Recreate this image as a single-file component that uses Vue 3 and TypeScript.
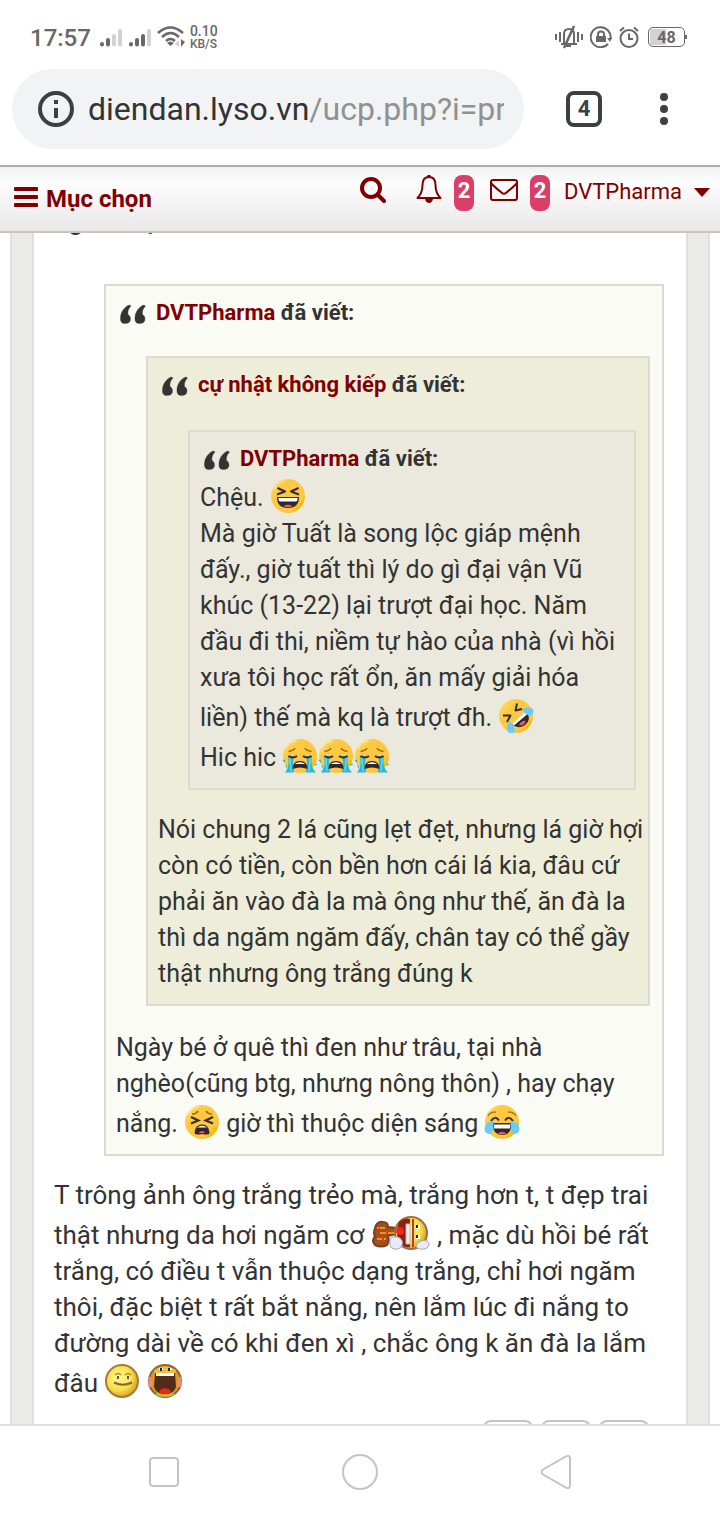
<script setup lang="ts">
import { defineComponent, h } from 'vue'

const Smiley = defineComponent({
  props: { name: { type: String, required: true }, label: { type: String, required: true } },
  setup(props) {
    const wide = props.name === 'guitar'
    return () =>
      h(
        'svg',
        {
          class: ['smiley', wide ? 'smiley-wide' : ''],
          viewBox: wide ? '0 0 60 36' : '0 0 36 36',
          role: 'img',
          'aria-label': props.label,
        },
        [h('use', { href: `#sm-${props.name}` })],
      )
  },
})

const QuoteMark = defineComponent({
  setup() {
    return () =>
      h('svg', { class: 'quote-mark', viewBox: '0 0 30 24', 'aria-hidden': 'true' }, [
        h('use', { href: '#quote-mark' }),
      ])
  },
})

const postActions: string[] = ['Trích dẫn', 'Báo cáo', 'Xóa']
</script>

<template>
  <div class="screen">
    <svg class="defs" width="0" height="0" aria-hidden="true">
      <defs>
        <linearGradient id="gold" x1="0.1" y1="0.1" x2="0.95" y2="0.85">
          <stop offset="0" stop-color="#ffd965" />
          <stop offset="0.25" stop-color="#fdc943" />
          <stop offset="0.8" stop-color="#fdc840" />
          <stop offset="0.9" stop-color="#ffb800" />
        </linearGradient>
        <radialGradient id="yellow" cx="0.4" cy="0.4" r="0.6">
          <stop offset="0" stop-color="#fff98a" />
          <stop offset="0.65" stop-color="#f9e04b" />
          <stop offset="1" stop-color="#dda52e" />
        </radialGradient>
        <symbol id="quote-mark" viewBox="0 0 30 24">
          <g fill="#333" stroke="#333" stroke-opacity="0.35" stroke-width="1">
            <path d="M11.500 3C7.500 4 3 9 2.500 15C2 20 4 21.500 7 21.500C10.500 21.500 12.500 20 12.500 17C12.500 14.500 11.500 13.500 10 12.500C9.500 9 10.500 6.500 13 4Z" />
            <path d="M26 3C22 4 17.500 9 17 15C16.500 20 18.500 21.500 21.500 21.500C25 21.500 27 20 27 17C27 14.500 26 13.500 24.500 12.500C24 9 25 6.500 27.500 4Z" />
          </g>
        </symbol>
        <symbol id="sm-laugh" viewBox="0 0 36 36">
          <circle cx="18" cy="18" r="17" fill="url(#gold)" />
          <path d="M4 11Q7 4 14 3" fill="none" stroke="#ffe59a" stroke-width="1.500" stroke-linecap="round" />
          <path d="M7.500 10L15 13.500L7 16.500M28.500 10L21 13.500L29 16.500" fill="none" stroke="#352c38" stroke-width="2" stroke-linejoin="round" />
          <path d="M7 19H29Q29 30 18 30Q7 30 7 19Z" fill="#302633" />
          <path d="M8.500 20H27.500V22Q27 23.500 25.500 23.500H10.500Q9 23.500 8.500 22Z" fill="#fff" />
          <path d="M13.500 28Q18 25.500 22.500 28Q18 30.500 13.500 28Z" fill="#f05a5a" />
        </symbol>
        <symbol id="sm-rofl" viewBox="0 0 36 36">
          <circle cx="18" cy="18" r="17" fill="url(#gold)" />
          <path d="M19 5.500L17.500 12.500L24 11M5 17.500L12.500 17.500L9 24" fill="none" stroke="#352c38" stroke-width="2" stroke-linejoin="round" />
          <path d="M13.500 26L28.500 13.500Q34 22 27 27Q20 32 13.500 26Z" fill="#302633" />
          <path d="M14 25.500L28 13.500L29.500 16L16 27.500Z" fill="#fff" />
          <path d="M21 27.500Q22 23 27.500 22.500Q27.500 27.500 21 27.500Z" fill="#f05a5a" />
          <path d="M24 11Q30 8 35 11Q37 16 32 17.500Q27 17 24 11ZM11 23Q17 28 17 33Q14 37 10 34Q8 30 11 23Z" fill="#67cdf8" />
        </symbol>
        <symbol id="sm-cry" viewBox="0 0 36 36">
          <circle cx="18" cy="18" r="17" fill="url(#gold)" />
          <path d="M4 10Q7 4 14 3" fill="none" stroke="#ffe59a" stroke-width="1.500" stroke-linecap="round" />
          <path d="M6 18H12Q10 24 12 34.500L3 34.500Q8 29 6 18ZM30 18H24Q26 24 24 34.500L34 34.500Q28 29 30 18Z" fill="#27b9d7" />
          <path d="M8 19Q8 26 9 33M28 19Q28 26 27 33" fill="none" stroke="#65d6ea" stroke-width="1.500" />
          <path d="M0.500 22L3 21.500V25ZM35.500 26L32.500 28V25.500ZM3 27L5 28V31Z" fill="#27b9d7" />
          <path d="M6.500 13.500Q12 12.500 13 10M29.500 13.500Q24 12.500 23 10" fill="none" stroke="#a26c12" stroke-width="1.500" />
          <path d="M6.500 18Q11 21 15 18M29.500 18Q25 21 21 18" fill="none" stroke="#352c38" stroke-width="2" />
          <path d="M10.500 31Q10.500 23 18 23Q25.500 23 25.500 31Q18 28 10.500 31Z" fill="#302633" />
          <path d="M12.500 26Q18 22.500 23.500 26Z" fill="#fff" />
        </symbol>
        <symbol id="sm-tired" viewBox="0 0 36 36">
          <circle cx="18" cy="18" r="17" fill="url(#gold)" />
          <path d="M4 11Q7 4 14 3" fill="none" stroke="#ffe59a" stroke-width="1.500" stroke-linecap="round" />
          <path d="M8 10Q12 10 14 7M28 10Q24 10 22 7" fill="none" stroke="#a26c12" stroke-width="1.500" />
          <path d="M7 13L14.500 16.500L7 19.500M29 13L21.500 16.500L29 19.500" fill="none" stroke="#352c38" stroke-width="2" />
          <path d="M10.500 29Q11 20.500 18 20.500Q25 20.500 25.500 29Q25 31.500 18 30Q11 31.500 10.500 29Z" fill="#302633" />
          <path d="M13 23.500Q18 20 23 23.500Z" fill="#fff" />
          <path d="M14.500 28.500Q18 25.500 21.500 28.500Q18 30 14.500 28.500Z" fill="#f05a5a" />
        </symbol>
        <symbol id="sm-joy" viewBox="0 0 36 36">
          <circle cx="18" cy="18" r="17" fill="url(#gold)" />
          <path d="M4 12Q6 8 12 8M32 12Q30 8 24 8" fill="none" stroke="#b57a18" stroke-width="1.500" />
          <path d="M7 17Q11 11 15 16.500M29 17Q25 11 21 16.500" fill="none" stroke="#352c38" stroke-width="2" />
          <path d="M9 19H27Q28 31 18 31Q8 31 9 19Z" fill="#302633" />
          <path d="M10 20.500H26V24.500H10Z" fill="#fff" />
          <path d="M13.500 29.500Q18 26 22.500 29.500Q18 31.500 13.500 29.500Z" fill="#f05a5a" />
          <path d="M9.500 17Q2 17.500 0.500 24Q0.500 30 6 30Q10 28 9.500 17ZM26.500 17Q34 17.500 35.500 24Q35.500 30 30 30Q26 28 26.500 17Z" fill="#67cdf8" />
        </symbol>
        <symbol id="sm-smirk" viewBox="0 0 36 36">
          <circle cx="18" cy="18" r="16" fill="url(#yellow)" stroke="#a97a31" stroke-width="2" />
          <path d="M11 12Q14 9 17 12M21 12Q24 9 27 12" fill="none" stroke="#b0862a" stroke-width="1.500" />
          <path d="M11 15H17M21 15H27" stroke="#f3efc0" stroke-width="2" />
          <path d="M14 13V16M24 13V16" stroke="#6b5127" stroke-width="2" />
          <path d="M10 19.500Q19 24 28 19.500" fill="none" stroke="#85672b" stroke-width="2" />
        </symbol>
        <symbol id="sm-scream" viewBox="0 0 36 36">
          <circle cx="18" cy="18" r="16" fill="#d99a29" stroke="#8f6430" stroke-width="2" />
          <path d="M7 7Q18 0 29 7L28 10H8Z" fill="#f0bd3c" />
          <path d="M3 14V24M33 14V24" stroke="#eb8a86" stroke-width="3" />
          <path d="M12 6H16M21 6H25" stroke="#fff" stroke-width="2" />
          <path d="M14 5V8M22 5V8" stroke="#222" stroke-width="2" />
          <path d="M8 10H28L29 24Q27 31 18 31Q9 31 7 24Z" fill="#522b1a" />
          <path d="M9 10H27V13H9Z" fill="#fff" />
          <path d="M12 28Q18 22 24 28Q23 31 18 31Q13 31 12 28Z" fill="#ee2417" />
          <path d="M9 31Q18 35 27 31" fill="none" stroke="#a8c93a" stroke-width="2" />
        </symbol>
        <symbol id="sm-guitar" viewBox="0 0 60 36">
          <path d="M4 13Q6 6 12 7Q17 7 17 12L25 13V19L17 21Q19 27 16 30Q10 33 4 30Q0 26 4 21Q2 18 4 13Z" fill="#a3501d" stroke="#74441d" stroke-width="2" />
          <path d="M6 13H14M6 24H15M9 18H23" stroke="#e89423" stroke-width="2" />
          <path d="M8 16V13M12 26V22M16 15V19" stroke="#df3d11" stroke-width="2" />
          <circle cx="40" cy="18" r="16" fill="url(#yellow)" stroke="#a46c45" stroke-width="2" />
          <path d="M28 7Q34 2 39 4V32Q32 33 28 27Q24 18 28 7Z" fill="#8d1f14" />
          <circle cx="29" cy="16" r="4" fill="#f3271a" />
          <path d="M35 9H39V29H35Z" fill="#eee" stroke="#bbb" stroke-width="1" />
          <path d="M42 4V32" stroke="#cc3b21" stroke-width="2" />
          <path d="M45 12H49M45 22H49" stroke="#fff" stroke-width="4" />
          <path d="M46 10V13M46 20V23" stroke="#222" stroke-width="2" />
          <path d="M19 24Q23 20 29 23Q34 28 29 33Q22 36 19 31Z" fill="#e9eaf8" stroke="#a3a4bd" stroke-width="1" />
          <path d="M46 29Q50 24 56 26Q60 29 56 33Q50 36 45 32Z" fill="#e9eaf8" stroke="#a3a4bd" stroke-width="1" />
        </symbol>
      </defs>
    </svg>

    <div class="status-bar">
      <div class="status-left">
        <span class="clock">17:57</span>
        <svg class="signal" viewBox="0 0 22 20" aria-hidden="true">
          <g stroke-width="4" stroke-linecap="round" stroke="#686868">
            <path d="M2 16V16.500M8 12V16.500" />
            <path d="M14 8V16.500M20 3V16.500" stroke="#d2d2d2" />
          </g>
        </svg>
        <svg class="signal second" viewBox="0 0 22 20" aria-hidden="true">
          <g stroke-width="4" stroke-linecap="round" stroke="#686868">
            <path d="M2 16V16.500M8 12V16.500M14 8V16.500" />
            <path d="M20 3V16.500" stroke="#d2d2d2" />
          </g>
        </svg>
        <svg class="wifi" viewBox="0 0 28 22" aria-hidden="true">
          <g fill="none" stroke="#686868" stroke-width="2.500">
            <path d="M1 7Q13.500 -4 26 7M5 11Q13.500 3 22 11M9 15Q13.500 11 18 15" />
          </g>
          <path d="M10 17Q13.500 14 17 17L13.500 20Z" fill="#686868" />
          <path d="M22 14V21L18 18Z" fill="#d2d2d2" />
          <path d="M24 13V21L28 16Z" fill="#686868" />
        </svg>
        <span class="rate"><span>0.10</span><span class="unit">KB/S</span></span>
      </div>
      <div class="status-right">
        <svg class="mute" viewBox="0 0 30 24" aria-hidden="true">
          <g fill="none" stroke="#686868" stroke-width="2">
            <path d="M2 9V15M6 7V17M24 7V17M28 9V15" />
            <path d="M7 19H23M10 19V9Q10 4 15 4Q20 4 20 9V19M12 21H17" />
            <path d="M20 1L10 23" stroke-width="2.500" />
          </g>
        </svg>
        <svg class="lock" viewBox="0 0 22 22" aria-hidden="true">
          <path d="M18 18A10 10 0 1 1 20.500 13" fill="none" stroke="#686868" stroke-width="2" />
          <path d="M17 12H22L20 16Z" fill="#686868" />
          <path d="M6 10H16V16H6Z" fill="#686868" />
          <path d="M8 10V8Q8 5.500 11 5.500Q14 5.500 14 8V10" fill="none" stroke="#686868" stroke-width="2" />
        </svg>
        <svg class="alarm" viewBox="0 0 20 22" aria-hidden="true">
          <g fill="none" stroke="#686868" stroke-width="2">
            <circle cx="10" cy="12.500" r="8.500" />
            <path d="M10 7.500V13H14M1 5L5 1.500M19 5L15 1.500" />
          </g>
        </svg>
        <span class="battery">48</span>
      </div>
    </div>

    <div class="toolbar">
      <button class="address" type="button">
        <svg class="info" viewBox="0 0 36 36" aria-hidden="true">
          <circle cx="18" cy="18" r="16" fill="none" stroke="#3c4043" stroke-width="4" />
          <path d="M18 9V13M18 17V27" stroke="#3c4043" stroke-width="4" />
        </svg>
        <span class="url">diendan.lyso.vn<span class="path">/ucp.php?i=privmsg</span></span>
      </button>
      <button class="tabs" type="button">4</button>
      <button class="more" type="button" aria-label="Menu">
        <svg viewBox="0 0 8 32" aria-hidden="true">
          <g fill="#3c4043"><circle cx="4" cy="4" r="4" /><circle cx="4" cy="16" r="4" /><circle cx="4" cy="28" r="4" /></g>
        </svg>
      </button>
    </div>

    <header class="site-header">
      <a class="menu" href="#menu">
        <svg viewBox="0 0 24 20" aria-hidden="true"><path d="M1.500 2H22.500M1.500 10H22.500M1.500 18H22.500" stroke="#800000" stroke-width="4" stroke-linecap="round" /></svg>
        Mục chọn
      </a>
      <nav class="tools">
        <a class="search" href="#search" aria-label="Tìm kiếm">
          <svg viewBox="0 0 26 26" aria-hidden="true"><circle cx="11" cy="11" r="9" fill="none" stroke="#800000" stroke-width="4" /><path d="M18 18L24 24" stroke="#800000" stroke-width="4" stroke-linecap="round" /></svg>
        </a>
        <a class="notice" href="#notifications">
          <svg class="bell" viewBox="0 0 26 28" aria-hidden="true">
            <path d="M13 2C8 2 6.500 6 6.500 10C6.500 17 4.500 20 1.500 23H24.500C21.500 20 19.500 17 19.500 10C19.500 6 18 2 13 2Z" fill="none" stroke="#800000" stroke-width="2" stroke-linejoin="round" />
            <path d="M13 0V3" stroke="#800000" stroke-width="3" /><path d="M9 24H17Q16 28 13 28Q10 28 9 24Z" fill="#800000" />
          </svg>
          <span class="badge">2</span>
        </a>
        <a class="notice" href="#messages">
          <svg class="mail" viewBox="0 0 28 22" aria-hidden="true">
            <path d="M3 1H25Q27 1 27 3V19Q27 21 25 21H3Q1 21 1 19V3Q1 1 3 1ZM1.500 4.500Q4 7.500 11.500 13.500Q14 16 16.500 13.500Q24 7.500 26.500 4.500" fill="none" stroke="#800000" stroke-width="2" />
          </svg>
          <span class="badge">2</span>
        </a>
        <a class="user" href="#user">DVTPharma
          <svg viewBox="0 0 16 10" aria-hidden="true"><path d="M0 0H16L8 9Z" fill="#800000" /></svg>
        </a>
      </nav>
    </header>

    <main class="page">
      <article class="post">
        <p class="lead">nghe nhị</p>
        <blockquote class="quote outer">
          <cite class="cite"><QuoteMark /><a href="#u1">DVTPharma</a>&nbsp;đã viết:</cite>
          <blockquote class="quote middle">
            <cite class="cite"><QuoteMark /><a href="#u2">cự nhật không kiếp</a>&nbsp;đã viết:</cite>
            <blockquote class="quote inner">
              <cite class="cite"><QuoteMark /><a href="#u1">DVTPharma</a>&nbsp;đã viết:</cite>
              <p>
                Chệu. <Smiley name="laugh" label="😆" /><br />
                Mà giờ Tuất là song lộc giáp mệnh đấy., giờ tuất thì lý do gì đại vận Vũ khúc (13-22) lại trượt đại học. Năm
                đầu đi thi, niềm tự hào của nhà (vì hồi xưa tôi học rất ổn, ăn mấy giải hóa liền) thế mà kq là trượt đh.
                <Smiley name="rofl" label="🤣" /><br />
                Hic hic <Smiley name="cry" label="😭" /><Smiley name="cry" label="😭" /><Smiley name="cry" label="😭" />
              </p>
            </blockquote>
            <p class="reply">
              Nói chung 2 lá cũng lẹt đẹt, nhưng lá giờ hợi còn có tiền, còn bền hơn cái lá kia, đâu cứ phải ăn vào đà la
              mà ông như thế, ăn đà la thì da ngăm ngăm đấy, chân tay có thể gầy thật nhưng ông trắng đúng k
            </p>
          </blockquote>
          <p>
            Ngày bé ở quê thì đen như trâu, tại nhà nghèo(cũng btg, nhưng nông thôn) , hay chạy nắng.
            <Smiley name="tired" label="😫" /> giờ thì thuộc diện sáng <Smiley name="joy" label="😂" />
          </p>
        </blockquote>
        <p>
          T trông ảnh ông trắng trẻo mà, trắng hơn t, t đẹp trai thật nhưng da hơi ngăm cơ
          <Smiley name="guitar" label="🎸" /> , mặc dù hồi bé rất trắng, có điều t vẫn thuộc dạng trắng, chỉ hơi ngăm
          thôi, đặc biệt t rất bắt nắng, nên lắm lúc đi nắng to đường dài về có khi đen xì , chắc ông k ăn đà la lắm đâu
          <Smiley name="smirk" label="😏" /> <Smiley name="scream" label="😱" />
        </p>
        <div class="actions">
          <button v-for="action in postActions" :key="action" type="button" :aria-label="action"></button>
        </div>
      </article>
    </main>

    <nav class="system-nav">
      <button type="button" aria-label="Gần đây"><svg viewBox="0 0 38 38" aria-hidden="true"><rect x="5" y="5" width="28" height="28" rx="3" /></svg></button>
      <button type="button" aria-label="Trang chủ"><svg viewBox="0 0 38 38" aria-hidden="true"><circle cx="19" cy="19" r="17" /></svg></button>
      <button type="button" aria-label="Quay lại"><svg viewBox="0 0 38 38" aria-hidden="true"><path d="M29 3.500Q33 1.500 33 6V32Q33 36.500 29 34.500L6 21.500Q3 19 6 16.500Z" /></svg></button>
    </nav>
  </div>
</template>

<style>
body {
  margin: 0;
  background: #fff;
}
</style>

<style scoped>
.screen {
  display: flex;
  flex-direction: column;
  height: 100vh;
  overflow: hidden;
  background: #fff;
  color: #333;
  font-family: Roboto, "Noto Sans", sans-serif;
}
.defs { position: absolute; }
svg { display: block; flex: none; }
button {
  padding: 0;
  border: 0;
  background: none;
  font: inherit;
  color: inherit;
}
a { color: #800000; text-decoration: none; }
p { margin: 0; }

.status-bar {
  display: flex;
  justify-content: space-between;
  align-items: center;
  height: 69px;
  flex: none;
  box-sizing: border-box;
  padding: 6px 35px 0 30px;
  color: #686868;
}
.status-left, .status-right { display: flex; align-items: center; }
.status-right { padding-bottom: 2px; }
.clock { font-size: 24px; font-weight: 500; }
.signal { width: 22px; height: 20px; margin-left: 9px; }
.signal.second { margin-left: 7px; }
.wifi { width: 28px; height: 22px; margin: 0 0 2px 6px; }
.rate {
  display: flex;
  flex-direction: column;
  margin-left: 5px;
  font-size: 14px;
  line-height: 13px;
  font-weight: 500;
}
.unit { font-size: 12px; }
.mute { width: 30px; height: 24px; }
.lock { width: 22px; height: 22px; margin-left: 6px; }
.alarm { width: 20px; height: 22px; margin-left: 7px; }
.battery {
  position: relative;
  box-sizing: border-box;
  width: 37px;
  height: 20px;
  margin-left: 9px;
  border: 1px solid #686868;
  border-radius: 5px;
  background: linear-gradient(#d2d2d2, #d2d2d2) 1px 1px / 16px 16px no-repeat;
  font-size: 16px;
  line-height: 20px;
  font-weight: 700;
  text-align: center;
}
.battery::after {
  content: "";
  position: absolute;
  right: -3px;
  top: 7px;
  width: 2px;
  height: 4px;
  background: #686868;
}

.toolbar {
  display: flex;
  align-items: center;
  flex: none;
  padding: 0 52px 16px 12px;
  border-bottom: 2px solid #aeaba8;
}
.address {
  display: flex;
  align-items: center;
  flex: 1;
  min-width: 0;
  height: 80px;
  padding: 0 20px 0 26px;
  border-radius: 40px;
  background: #f1f3f5;
  text-align: left;
}
.info { width: 36px; height: 36px; margin-right: 14px; }
.url {
  flex: 1;
  min-width: 0;
  overflow: hidden;
  white-space: nowrap;
  font-size: 32px;
  line-height: 44px;
}
.path { color: #8f9193; }
.tabs {
  box-sizing: border-box;
  width: 36px;
  height: 36px;
  margin-left: 42px;
  border: 4px solid #3c4043;
  border-radius: 8px;
  color: #3c4043;
  font-size: 22px;
  line-height: 28px;
  font-weight: 700;
}
.more { margin-left: 58px; }
.more svg { width: 8px; height: 32px; }

.site-header {
  display: flex;
  justify-content: space-between;
  flex: none;
  height: 56px;
  padding: 8px 10px 0 14px;
  border-bottom: 2px solid #c9c4c0;
  background: linear-gradient(#f0f2f2, #fdfdfd 16px, #e8e8e8);
}
.menu {
  display: flex;
  align-items: center;
  gap: 8px;
  height: 48px;
  font-size: 24px;
  font-weight: 700;
}
.menu svg { width: 24px; height: 20px; margin-bottom: 4px; }
.tools { display: flex; height: 36px; font-size: 22px; }
.tools a { display: flex; align-items: center; height: 32px; }
.search { margin-right: 30px; }
.search svg { width: 26px; height: 26px; margin-bottom: 2px; }
.bell { width: 26px; height: 28px; margin: 0 12px 4px 0; }
.mail { width: 28px; height: 22px; margin: 0 12px 2px 0; }
.notice { margin-right: 16px; }
.notice + .user { margin-left: -2px; }
.badge {
  align-self: flex-start;
  flex: none;
  width: 20px;
  height: 36px;
  border-radius: 8px;
  background: #db3f67;
  color: #fff;
  font-weight: 700;
  line-height: 32px;
  text-align: center;
}
.user svg { width: 16px; height: 10px; margin: 4px 0 0 12px; }

.page {
  flex: 1;
  min-height: 0;
  overflow: hidden;
  margin: 0 10px;
  padding: 0 20px;
  border: solid #dfdfdf;
  border-width: 0 2px;
  background: #eaebe6;
}
.post {
  display: flow-root;
  min-height: 100%;
  box-sizing: border-box;
  padding: 0 20px;
  border: solid #dfdfdf;
  border-width: 0 2px;
  background: #fff;
  font-size: 26px;
  line-height: 36px;
}
.lead { margin: -30px 0 45px; font-weight: 500; }
.quote {
  margin: 0 2px 24px 30px;
  padding: 8px 10px 12px;
  border: 2px solid #dbdbce;
  font-size: 25px;
}
.outer { margin: 0 2px 21px 50px; background: #fafbf5; }
.middle { background: #eeedd9; }
.inner { margin-bottom: 22px; background: #ebe9dd; }
.reply { margin-right: -8px; }
.cite {
  display: flex;
  align-items: center;
  padding-top: 2px;
  font-size: 22px;
  line-height: 34px;
  font-style: normal;
  font-weight: 700;
}
.cite + .middle { margin-top: 26px; }
.cite + .inner { margin-top: 28px; }
.quote-mark {
  width: 30px;
  height: 24px;
  margin: 2px 8px 0 2px;
}
:deep(.smiley) {
  display: inline-block;
  width: 36px;
  height: 36px;
  margin: 2px 0;
  vertical-align: bottom;
}
:deep(.smiley-wide) { width: 60px; }
.actions {
  display: flex;
  justify-content: flex-end;
  gap: 8px;
  margin: 19px 17px 0 0;
}
.actions button {
  width: 50px;
  height: 48px;
  border: 2px solid #c7c3bf;
  border-radius: 8px;
}

.system-nav {
  display: flex;
  justify-content: center;
  gap: 158px;
  flex: none;
  padding: 27px 0 29px;
  border-top: 2px solid #dfdfdf;
}
.system-nav svg {
  width: 38px;
  height: 38px;
  fill: none;
  stroke: #c4c4c4;
  stroke-width: 2;
}
</style>
